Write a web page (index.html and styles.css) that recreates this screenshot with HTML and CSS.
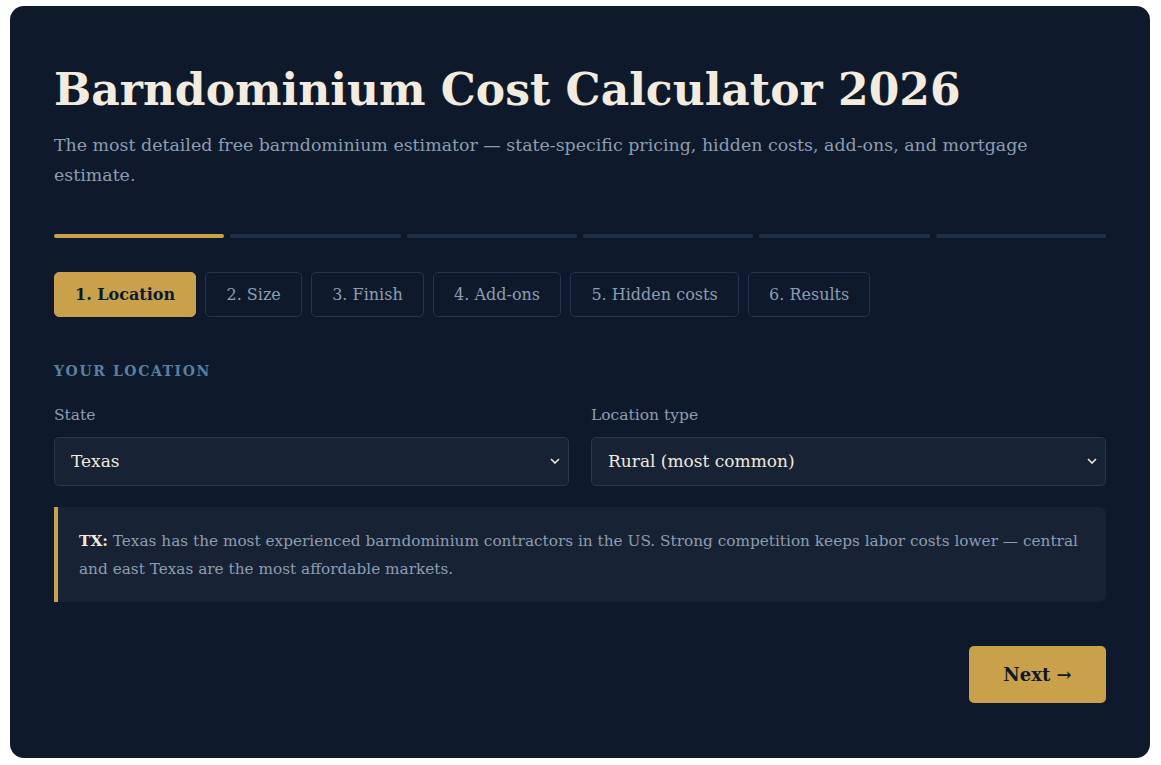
FILE: index.html
```html
<!DOCTYPE html>
<html lang="en">
<head>
<meta charset="utf-8">
<title>Barndominium Cost Calculator 2026</title>
<link rel="stylesheet" href="styles.css">
</head>
<body>
<main class="card">
  <h1 class="title">Barndominium Cost Calculator 2026</h1>
  <p class="subtitle">The most detailed free barndominium estimator — state-specific pricing, hidden costs, add-ons, and mortgage estimate.</p>

  <div class="progress">
    <span class="seg seg-on"></span>
    <span class="seg"></span>
    <span class="seg"></span>
    <span class="seg"></span>
    <span class="seg"></span>
    <span class="seg"></span>
  </div>

  <nav class="tabs">
    <button class="tab tab-on">1. Location</button>
    <button class="tab">2. Size</button>
    <button class="tab">3. Finish</button>
    <button class="tab">4. Add-ons</button>
    <button class="tab">5. Hidden costs</button>
    <button class="tab">6. Results</button>
  </nav>

  <h2 class="section">Your location</h2>

  <div class="fields">
    <div class="field">
      <label class="label" for="state">State</label>
      <div class="select-wrap">
        <select id="state" class="select"><option>Texas</option></select>
        <svg class="chev" width="10" height="6" viewBox="0 0 10 6"><path d="M1 1 L5 5 L9 1" fill="none" stroke="#f0e9dc" stroke-width="1.6"/></svg>
      </div>
    </div>
    <div class="field">
      <label class="label" for="loc">Location type</label>
      <div class="select-wrap">
        <select id="loc" class="select"><option>Rural (most common)</option></select>
        <svg class="chev" width="10" height="6" viewBox="0 0 10 6"><path d="M1 1 L5 5 L9 1" fill="none" stroke="#f0e9dc" stroke-width="1.6"/></svg>
      </div>
    </div>
  </div>

  <div class="note"><strong class="note-key">TX:</strong> Texas has the most experienced barndominium contractors in the US. Strong competition keeps labor costs lower — central and east Texas are the most affordable markets.</div>

  <div class="actions">
    <button class="next">Next →</button>
  </div>
</main>
</body>
</html>
```

FILE: styles.css
```css
html, body {
  margin: 0;
  padding: 0;
  background: #ffffff;
}
body {
  padding: 6px 11px 7px 10px;
  font-family: "DejaVu Serif", Georgia, serif;
}
.card {
  background: #0e1a2b;
  border-radius: 14px;
  padding: 58px 44px 54px 44px;
  box-sizing: border-box;
  min-height: 752px;
}
.title {
  margin: 0;
  color: #f2ebde;
  font-size: 44px;
  font-weight: 700;
  line-height: 1.2;
  letter-spacing: 0;
}
.subtitle {
  margin: 13px 0 0 0;
  color: #8c9db2;
  font-size: 17.4px;
  line-height: 30px;
}
.progress {
  display: flex;
  gap: 6px;
  margin-top: 44px;
}
.seg {
  flex: 1;
  height: 4px;
  border-radius: 2px;
  background: #1f2f48;
}
.seg-on { background: #c9a14b; }
.tabs {
  display: flex;
  gap: 9.4px;
  margin-top: 34px;
}
.tab {
  font-family: inherit;
  font-size: 16px;
  height: 45px;
  padding: 0 20px;
  border-radius: 5px;
  border: 1px solid #24354f;
  background: transparent;
  color: #8c9db2;
}
.tab-on {
  background: #c9a14b;
  border-color: #c9a14b;
  color: #0e1a2b;
  font-weight: 700;
}
.section {
  margin: 46px 0 0 0;
  font-size: 14px;
  font-weight: 700;
  text-transform: uppercase;
  letter-spacing: 1.6px;
  color: #5b7fa1;
}
.fields {
  display: grid;
  grid-template-columns: 1fr 1fr;
  gap: 22px;
  margin-top: 26px;
}
.field {
  display: flex;
  flex-direction: column;
}
.label {
  font-size: 15.5px;
  color: #8c9db2;
  line-height: 20px;
}
.select-wrap {
  position: relative;
  margin-top: 12px;
}
.select {
  appearance: none;
  -webkit-appearance: none;
  width: 100%;
  height: 49px;
  padding: 0 16px;
  font-family: inherit;
  font-size: 17px;
  color: #f0e9dc;
  background: #172234;
  border: 1px solid #27384f;
  border-radius: 5px;
}
.chev {
  position: absolute;
  right: 9px;
  top: 21px;
}
.note {
  margin-top: 21px;
  background: #172234;
  border-left: 4px solid #c9a14b;
  border-radius: 0 7px 7px 0;
  padding: 20px 22px 19px 21px;
  color: #8c9db2;
  font-size: 15.3px;
  line-height: 28px;
}
.note-key {
  color: #f0e9dc;
}
.actions {
  display: flex;
  justify-content: flex-end;
  margin-top: 44px;
}
.next {
  font-family: inherit;
  width: 137px;
  height: 57px;
  border: none;
  border-radius: 5px;
  background: #c9a14b;
  color: #0e1a2b;
  font-size: 18px;
  font-weight: 700;
}
```
